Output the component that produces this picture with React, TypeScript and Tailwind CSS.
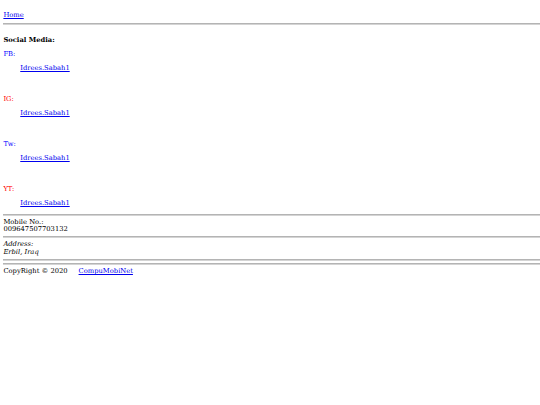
import React from "react";

const Hr = ({ className = "" }: { className?: string }) => (
  <div
    className={`h-0 border-t border-b border-solid border-t-[#b4b4b4] border-b-[#d4d4d4] ${className}`}
  />
);

const items = [
  { label: "FB:", color: "text-[#0000ff]" },
  { label: "IG:", color: "text-[#ff0000]" },
  { label: "Tw:", color: "text-[#0000ff]" },
  { label: "YT:", color: "text-[#ff0000]" },
];

export default function App() {
  return (
    <div className="w-[540px] h-[405px] overflow-hidden bg-white">
      <div className="[zoom:0.421875] w-[1280px] min-h-[960px] bg-white py-[8px] pl-[8px] font-['DejaVu_Serif',serif] text-[16px] leading-[17.8px] text-black">
        <div className="mt-[21px]">
          <a href="#" className="text-[#0000ee] underline">
            Home
          </a>
        </div>
        <Hr className="mt-[7px]" />
        <div className="mt-[28px] font-bold">Social Media:</div>
        <div className="mt-[16px]">
          {items.map((it, i) => (
            <div key={it.label} className={i === 0 ? "" : "mt-[54px]"}>
              <div className={it.color}>{it.label}</div>
              <div className="ml-[40px] mt-[17px]">
                <a href="#" className="text-[#0000ee] underline">
                  Idrees.Sabah1
                </a>
              </div>
            </div>
          ))}
        </div>
        <Hr className="mt-[14px]" />
        <div className="mt-[7px]">
          <div>Mobile No.:</div>
          <div>009647507703132</div>
        </div>
        <Hr className="mt-[6px]" />
        <div className="mt-[7px] italic">
          <div>Address:</div>
          <div>Erbil, Iraq</div>
        </div>
        <Hr className="mt-[6px]" />
        <Hr className="mt-[6px]" />
        <div className="mt-[7px]">
          <span>CopyRight © 2020</span>
          <a href="#" className="ml-[26px] text-[#0000ee] underline">
            CompuMobiNet
          </a>
        </div>
      </div>
    </div>
  );
}
